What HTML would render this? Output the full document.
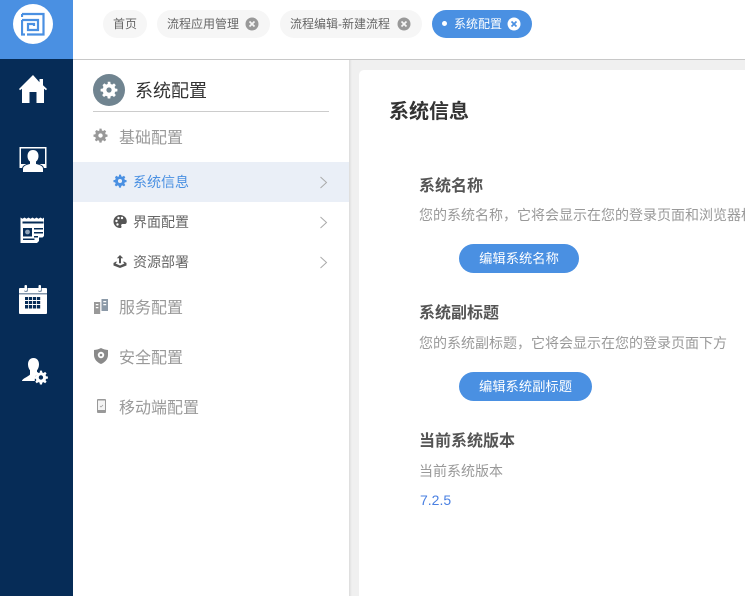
<!DOCTYPE html>
<html lang="zh"><head><meta charset="utf-8">
<style>
*{margin:0;padding:0;box-sizing:border-box}
html,body{width:745px;height:596px;overflow:hidden;background:#fff}
body{position:relative;font-family:"Liberation Sans","Noto Sans CJK SC",sans-serif}
.a{position:absolute;white-space:nowrap}
.tab{position:absolute;top:10px;height:28px;border-radius:14px;background:#f6f6f6;color:#666;font-size:12px;line-height:28px}
.x{position:absolute;top:7px;width:14px;height:14px}
.t{position:absolute;white-space:nowrap;line-height:20px}
svg{position:absolute;display:block}
</style></head><body>
<svg width="0" height="0" style="position:absolute"><defs>
<g id="gear"><path d="M10.300 1h3.400l.5 3a8 8 0 0 1 2 .8l2.500-1.700 2.400 2.400-1.700 2.500a8 8 0 0 1 .8 2l3 .5v3.400l-3 .5a8 8 0 0 1-.8 2l1.700 2.500-2.400 2.400-2.500-1.700a8 8 0 0 1-2 .8l-.5 3h-3.400l-.5-3a8 8 0 0 1-2-.8l-2.500 1.700-2.400-2.400 1.700-2.500a8 8 0 0 1-.8-2l-3-.5v-3.400l3-.5a8 8 0 0 1 .8-2L3.400 5.500l2.400-2.400 2.500 1.700a8 8 0 0 1 2-.8z M12 8.500a3.500 3.500 0 1 0 0 7 3.500 3.500 0 0 0 0-7z" fill-rule="evenodd"/></g>
<g id="xx"><circle cx="7" cy="7" r="7"/><path d="M4.500 4.500l5 5M9.500 4.500l-5 5" stroke-width="1.700" fill="none"/></g>
</defs></svg>

<!-- sidebar -->
<div class="a" style="left:0;top:0;width:73px;height:596px;background:#062c57"></div>
<div class="a" style="left:0;top:0;width:73px;height:59px;background:#4a90e2"></div>
<div class="a" style="left:13px;top:4px;width:40px;height:40px;border-radius:50%;background:#fff"></div>
<svg style="left:21px;top:12px" width="24" height="24" viewBox="0 0 24 24" fill="none" stroke="#4a90e2" stroke-width="2.200"><path d="M1 2h21.500v20.500H6"/><path d="M1 2v3"/><path d="M1 8v14.500h3"/><path d="M1 8h16v10H7v-6h6v2"/></svg>

<svg style="left:18px;top:75px" width="30" height="29" viewBox="0 0 30 29" fill="#fff"><path d="M15 0L1 14l1 1.200 2-1.500V28h7.500V17h7v11H26V13.700l2 1.500 1-1.200-4-3.800V4h-3.500v3.200z"/></svg>
<svg style="left:19px;top:146px" width="29" height="27" viewBox="0 0 29 27" fill="#fff"><path fill-rule="evenodd" d="M0.500 1h27v21h-27z M2 2.500v15.500h24V2.500z"/><path d="M14 3.500c3.600 0 6 2.700 6 6.500 0 2.800-1.200 4.800-2.500 5.800v1.700c2.300 1 7 1.500 7 5.500v3.500h-21V23c0-4 4.700-4.500 7-5.500v-1.700C9.200 14.800 8 12.800 8 10c0-3.800 2.400-6.500 6-6.500z" stroke="#062c57" stroke-width="1"/></svg>
<svg style="left:20px;top:217px" width="26" height="26" viewBox="0 0 26 26" fill="#fff"><path fill-rule="evenodd" d="M0.500 0.500l2 1.200 2-1.200 2 1.200 2-1.200 2 1.200 2-1.200 2 1.200 2-1.200 2 1.200 2-1.200 2 1.200 1.500-1.200V19l-7 7H0.500z M2.500 4.500v2h21v-2z M3 11v8.500h9V11z M14 11v1.500h9V11z M14 15v1.500h9V15z M14 19v1.500h4V19z M3 21.500V23h11.500v-1.500z"/><circle cx="7.500" cy="15" r="2.400" fill="#8fa3b8"/><path d="M19 20.500h5.500L19 25.500z" fill="#062c57"/></svg>
<svg style="left:19px;top:285px" width="28" height="29" viewBox="0 0 28 29" fill="#fff"><path fill-rule="evenodd" d="M1 3h4.500v3.500h3V3h11v3.500h3V3H27a1 1 0 0 1 1 1v24a1 1 0 0 1-1 1H1a1 1 0 0 1-1-1V4a1 1 0 0 1 1-1z M0 8.500V9.200h28v-.7z M6 12v3h3.200v-3z M10 12v3h3.200v-3z M14 12v3h3.200v-3z M18 12v3h3.200v-3z M6 16v3h3.200v-3z M10 16v3h3.200v-3z M14 16v3h3.200v-3z M18 16v3h3.200v-3z M6 20v3.500h3.200V20z M10 20v3.500h3.200V20z M14 20v3.500h3.200V20z M18 20v3.500h3.200V20z"/><rect x="5.500" y="0" width="2.500" height="6" rx="1"/><rect x="19.500" y="0" width="2.500" height="6" rx="1"/></svg>
<svg style="left:22px;top:357px" width="27" height="29" viewBox="0 0 27 29" fill="#fff"><path d="M11.500 1c3.700 0 5.500 2.800 5.500 6.500 0 2.500-1 4.500-2 5.800v2.400l1.200.8A7.500 7.500 0 0 0 12.800 24H0v-.5c1.500-2.500 6.500-4 8-6v-4.200C7 12 6 10 6 7.500 6 3.800 7.800 1 11.500 1z"/><use href="#gear" transform="translate(11.500 13) scale(.62)"/></svg>

<!-- topbar -->
<div class="a" style="left:73px;top:59px;width:672px;height:1px;background:#c8c8c8"></div>
<div class="tab" style="left:103px;width:44px;padding-left:10px">首页</div>
<div class="tab" style="left:157px;width:113px;padding-left:10px">流程应用管理<svg class="x" style="left:88px;fill:#999;stroke:#f6f6f6" viewBox="0 0 14 14"><use href="#xx"/></svg></div>
<div class="tab" style="left:280px;width:142px;padding-left:10px">流程编辑-新建流程<svg class="x" style="left:117px;fill:#999;stroke:#f6f6f6" viewBox="0 0 14 14"><use href="#xx"/></svg></div>
<div class="tab" style="left:432px;width:100px;padding-left:22px;background:#4a90e2;color:#fff">系统配置<svg class="x" style="left:75px;fill:#fff;stroke:#4a90e2" viewBox="0 0 14 14"><use href="#xx"/></svg>
<div class="a" style="left:10px;top:11px;width:5px;height:5px;border-radius:50%;background:#fff"></div></div>

<!-- main background -->
<div class="a" style="left:349px;top:60px;width:396px;height:536px;background:#f0f0f0"></div>
<div class="a" style="left:349px;top:60px;width:3px;height:536px;background:linear-gradient(90deg,#dcdcdc,#f0f0f0)"></div>
<div class="a" style="left:359px;top:70px;width:386px;height:526px;background:#fff;border-top-left-radius:5px"></div>

<!-- left menu -->
<div class="a" style="left:93px;top:74px;width:32px;height:32px;border-radius:50%;background:#708490"></div>
<svg style="left:100px;top:81px;fill:#fff" width="18" height="18" viewBox="0 0 24 24"><use href="#gear"/></svg>
<div class="t" style="left:135px;top:80px;font-size:18px;line-height:22px;color:#333">系统配置</div>
<div class="a" style="left:93px;top:111px;width:236px;height:1px;background:#ccc"></div>

<svg style="left:93px;top:128px;fill:#999" width="15" height="15" viewBox="0 0 24 24"><use href="#gear"/></svg>
<div class="t" style="left:119px;top:128px;font-size:16px;line-height:22px;color:#999">基础配置</div>

<div class="a" style="left:73px;top:162px;width:276px;height:40px;background:#eaeff7"></div>
<svg style="left:113px;top:174px;fill:#4a90e2" width="14" height="14" viewBox="0 0 24 24"><use href="#gear"/></svg>
<div class="t" style="left:133px;top:172px;font-size:14px;color:#4a90e2">系统信息</div>
<svg style="left:319px;top:176px" width="9" height="13" viewBox="0 0 9 13" fill="none" stroke="#aaa" stroke-width="1"><path d="M1.500 1l6 5.500-6 5.500"/></svg>

<svg style="left:113px;top:214px" width="14" height="15" viewBox="0 0 14 15"><path fill="#555" fill-rule="evenodd" d="M7 1a6.500 6.500 0 0 0 0 13c1.500 0 1.800-1 1.300-2-.5-1.200.3-2 1.500-2h2c1.200 0 2-1 2-2.500C13.800 3.500 10.500 1 7 1z"/><circle cx="3.500" cy="7" r="1.200" fill="#fff"/><circle cx="5.500" cy="4" r="1.200" fill="#fff"/><circle cx="9" cy="4" r="1.200" fill="#fff"/><circle cx="4.500" cy="10.500" r="1.200" fill="#fff"/></svg>
<div class="t" style="left:133px;top:212px;font-size:14px;color:#666">界面配置</div>
<svg style="left:319px;top:216px" width="9" height="13" viewBox="0 0 9 13" fill="none" stroke="#aaa" stroke-width="1"><path d="M1.500 1l6 5.500-6 5.500"/></svg>

<svg style="left:113px;top:254px" width="14" height="15" viewBox="0 0 14 15" fill="#555"><path d="M7 1l3.200 3.200H8v5H6v-5H3.800z"/><path d="M.5 9l3-1.800v1.500L2.500 9.500 7 11.500l4.500-2-1-.8V7.200l3 1.800v2.500L7 14 .5 11.500z"/></svg>
<div class="t" style="left:133px;top:252px;font-size:14px;color:#666">资源部署</div>
<svg style="left:319px;top:256px" width="9" height="13" viewBox="0 0 9 13" fill="none" stroke="#aaa" stroke-width="1"><path d="M1.500 1l6 5.500-6 5.500"/></svg>

<svg style="left:94px;top:299px" width="14" height="15" viewBox="0 0 14 15" fill="#999"><path fill-rule="evenodd" d="M0 3h6.200v12H0z M1.800 5v1.200h2.600V5z M1.800 8v1.200h2.600V8z"/><path fill-rule="evenodd" d="M7.500 0H14v12H7.500z M9.300 2v1.200h2.900V2z M9.300 5v1.200h2.900V5z" fill="#8c9aa8"/></svg>
<div class="t" style="left:119px;top:298px;font-size:16px;line-height:22px;color:#999">服务配置</div>

<svg style="left:94px;top:348px" width="14" height="16" viewBox="0 0 14 16"><path fill="#8a8a8a" d="M7 0c2 1.200 4.500 1.800 7 2v5c0 4-3 7.500-7 9-4-1.500-7-5-7-9V2c2.500-.2 5-.8 7-2z"/><circle cx="7" cy="7" r="3.200" fill="#fff"/><circle cx="7" cy="7" r="1.300" fill="#8a8a8a"/></svg>
<div class="t" style="left:119px;top:348px;font-size:16px;line-height:22px;color:#999">安全配置</div>

<svg style="left:97px;top:399px" width="9" height="14" viewBox="0 0 9 14"><rect width="9" height="14" rx="1" fill="#999"/><rect x="1" y="1.500" width="7" height="9.500" fill="#f4f4f4"/><path d="M3 7l1 1 2-2" stroke="#999" stroke-width=".7" fill="none"/></svg>
<div class="t" style="left:119px;top:398px;font-size:16px;line-height:22px;color:#999">移动端配置</div>

<!-- content -->
<div class="t" style="left:389px;top:100px;font-size:20px;line-height:24px;font-weight:700;color:#333">系统信息</div>

<div class="t" style="left:419px;top:176px;font-size:16px;line-height:22px;font-weight:700;color:#555">系统名称</div>
<div class="t" style="left:419px;top:205px;width:326px;overflow:hidden;font-size:14px;color:#999">您的系统名称，它将会显示在您的登录页面和浏览器标签上</div>
<div class="a" style="left:459px;top:244px;width:120px;height:29px;border-radius:15px;background:#4a90e2;color:#fff;font-size:13.300px;line-height:29px;text-align:center">编辑系统名称</div>

<div class="t" style="left:419px;top:303px;font-size:16px;line-height:22px;font-weight:700;color:#555">系统副标题</div>
<div class="t" style="left:419px;top:333px;font-size:14px;color:#999">您的系统副标题，它将会显示在您的登录页面下方</div>
<div class="a" style="left:459px;top:372px;width:133px;height:29px;border-radius:15px;background:#4a90e2;color:#fff;font-size:13.300px;line-height:29px;text-align:center">编辑系统副标题</div>

<div class="t" style="left:419px;top:431px;font-size:16px;line-height:22px;font-weight:700;color:#555">当前系统版本</div>
<div class="t" style="left:419px;top:461px;font-size:14px;color:#999">当前系统版本</div>
<div class="t" style="left:420px;top:490px;font-size:14px;color:#4a80e2">7.2.5</div>
</body></html>
